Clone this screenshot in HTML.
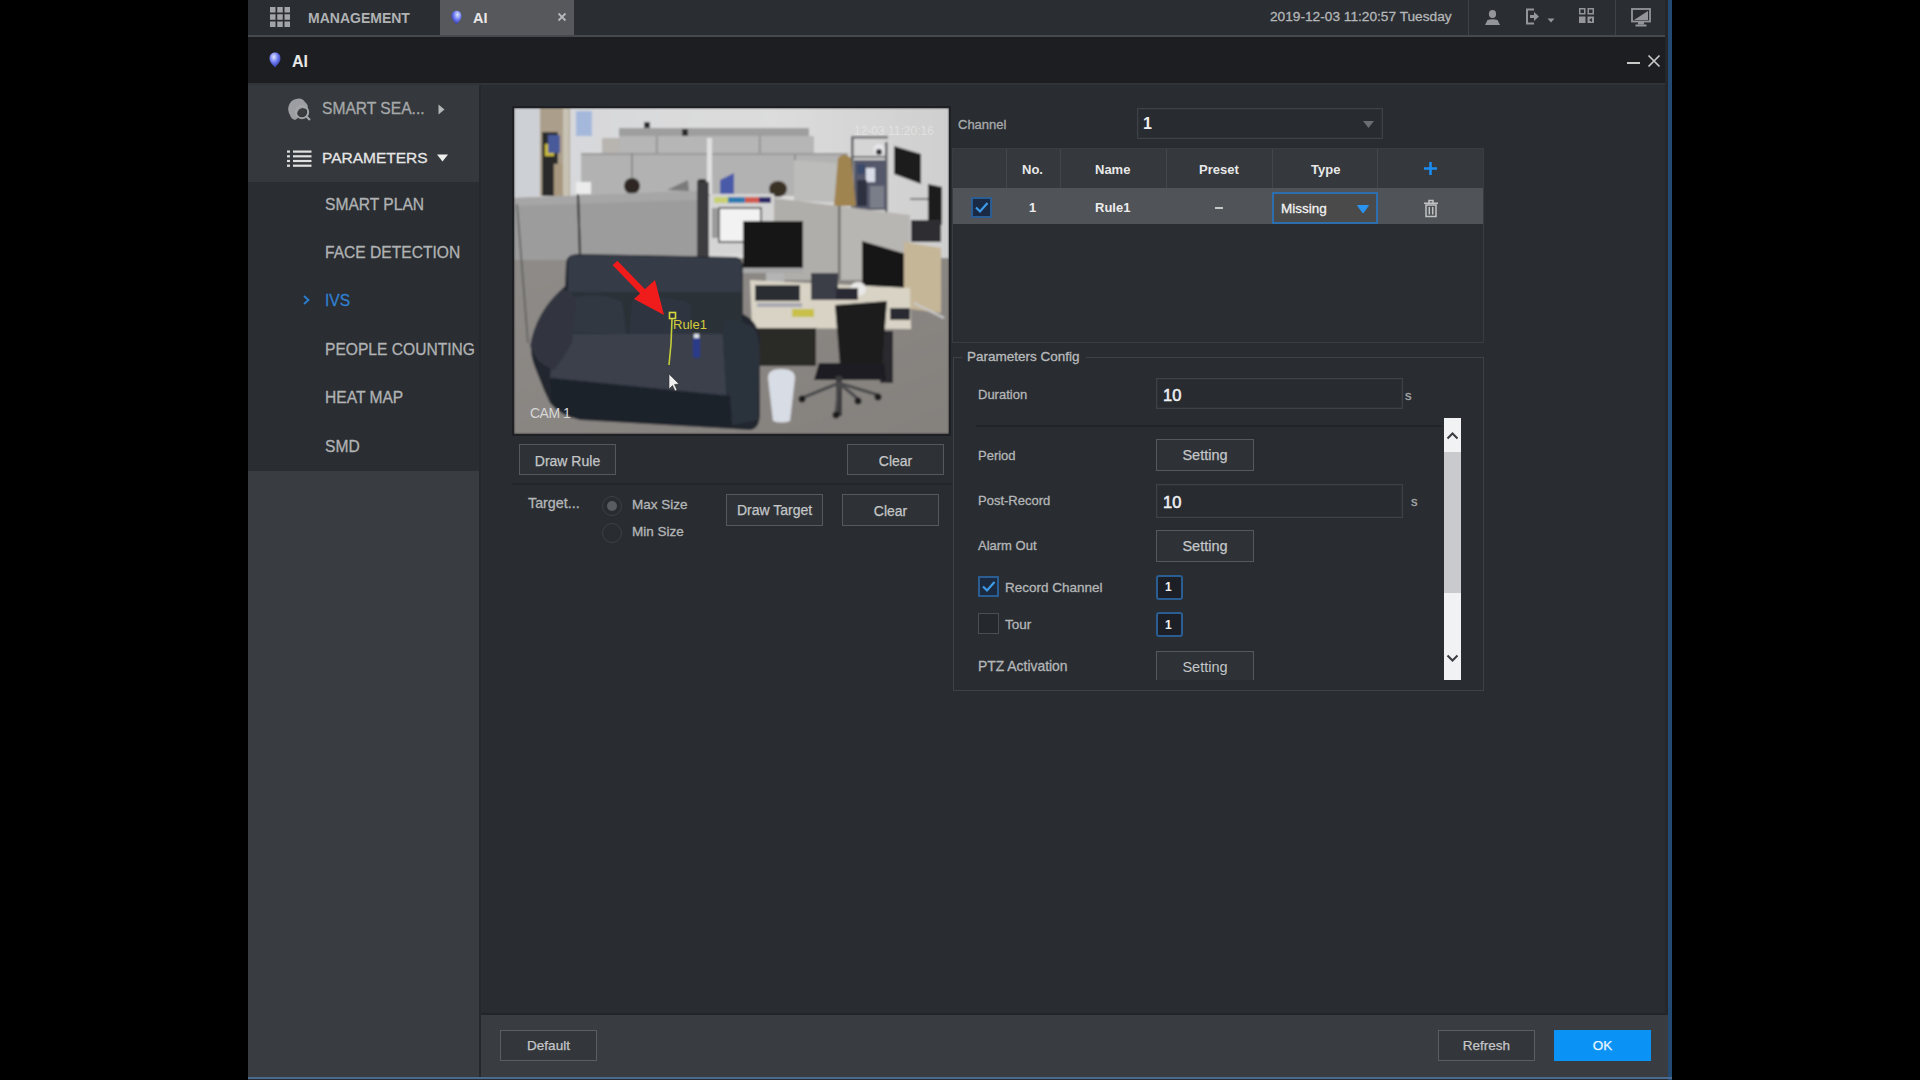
<!DOCTYPE html>
<html><head><meta charset="utf-8">
<style>
*{box-sizing:border-box;margin:0;padding:0}
html,body{width:1920px;height:1080px;overflow:hidden;background:#000;font-family:"Liberation Sans",sans-serif}
.a{position:absolute}
.t{position:absolute;white-space:pre;line-height:1;-webkit-text-stroke:0.3px currentColor}
.btn{position:absolute;border:1px solid #55585c;background:#2e3236;color:#c4c6c8;font-size:14px;text-align:center;-webkit-text-stroke:0.25px currentColor}
.inp{position:absolute;border:1px solid #3e4145;background:#282b2f;box-shadow:inset 0 0 0 1px #2e3135}
</style></head><body>
<!-- window -->
<div class="a" style="left:248px;top:0;width:1424px;height:1080px;background:#292d31"></div>
<!-- top bar -->
<div class="a" style="left:248px;top:0;width:1422px;height:35px;background:#2a2d32"></div>
<div class="a" style="left:248px;top:35px;width:1422px;height:2px;background:#45484c"></div>
<div class="a" style="left:440px;top:0;width:134px;height:35px;background:#57585c"></div>
<div class="a" style="left:1468px;top:0;width:1px;height:35px;background:#3e4145"></div>
<div class="a" style="left:1615px;top:0;width:1px;height:35px;background:#3e4145"></div>
<!-- title bar -->
<div class="a" style="left:248px;top:37px;width:1422px;height:46px;background:#1c1e21"></div>
<div class="a" style="left:248px;top:83px;width:1422px;height:2px;background:#303337"></div>
<!-- sidebar -->
<div class="a" style="left:248px;top:85px;width:231px;height:97px;background:#35383c"></div>
<div class="a" style="left:248px;top:182px;width:231px;height:289px;background:#2a2d31"></div>
<div class="a" style="left:248px;top:471px;width:231px;height:607px;background:#393c40"></div>
<div class="a" style="left:479px;top:85px;width:2px;height:993px;background:#25282c"></div>
<!-- footer -->
<div class="a" style="left:481px;top:1013px;width:1189px;height:2px;background:#232629"></div>
<div class="a" style="left:481px;top:1015px;width:1187px;height:62px;background:#393c40"></div>
<!-- blue edges -->
<div class="a" style="left:1665px;top:0;width:3px;height:1014px;background:#25272b"></div><div class="a" style="left:1668px;top:0;width:4px;height:1080px;background:#224a72"></div>
<div class="a" style="left:248px;top:1077px;width:1424px;height:2px;background:#4a6a90"></div>

<!-- top bar content -->
<svg class="a" style="left:270px;top:7px" width="20" height="20" viewBox="0 0 20 20" fill="#a2a4a8"><rect x="0.00" y="0.00" width="5.5" height="5.5"/><rect x="7.25" y="0.00" width="5.5" height="5.5"/><rect x="14.50" y="0.00" width="5.5" height="5.5"/><rect x="0.00" y="7.25" width="5.5" height="5.5"/><rect x="7.25" y="7.25" width="5.5" height="5.5"/><rect x="14.50" y="7.25" width="5.5" height="5.5"/><rect x="0.00" y="14.50" width="5.5" height="5.5"/><rect x="7.25" y="14.50" width="5.5" height="5.5"/><rect x="14.50" y="14.50" width="5.5" height="5.5"/></svg>
<div class="t" style="left:308px;top:11px;font-size:14px;font-weight:700;-webkit-text-stroke:0;color:#b0b2b4">MANAGEMENT</div>
<svg class="a" style="left:451px;top:10px" width="11" height="15" viewBox="0 0 12 16"><defs><radialGradient id="bg1" cx="0.6" cy="0.3" r="0.75"><stop offset="0" stop-color="#dfe6ff"/><stop offset="0.5" stop-color="#6a78f0"/><stop offset="1" stop-color="#2a309a"/></radialGradient></defs><path d="M6 0.5C9.5 0.5 11.5 3 11.5 6.5C11.5 10 8.5 12.5 6 15.5C3.5 12.5 0.5 10 0.5 6.5C0.5 3 2.5 0.5 6 0.5Z" fill="url(#bg1)"/></svg>
<div class="t" style="left:473px;top:11px;font-size:14.5px;font-weight:700;-webkit-text-stroke:0;color:#e8e8e8">AI</div>
<svg class="a" style="left:557px;top:12px" width="10" height="10" viewBox="0 0 10 10"><path d="M1.5 1.5L8.5 8.5M8.5 1.5L1.5 8.5" stroke="#b8b8bc" stroke-width="1.8"/></svg>
<div class="t" style="left:1270px;top:10px;font-size:13.7px;color:#b4b6b8">2019-12-03 11:20:57 Tuesday</div>

<!-- topbar icons -->
<svg class="a" style="left:1484px;top:9px" width="17" height="17" viewBox="0 0 17 17" fill="#939599">
<ellipse cx="8.5" cy="5" rx="3.6" ry="4"/><path d="M1 16 L3.5 11 Q8.5 9.5 13.5 11 L16 16Z"/></svg>
<svg class="a" style="left:1525px;top:8px" width="31" height="17" viewBox="0 0 31 17">
<path d="M9 1.5 H2 V15.5 H9" stroke="#939599" stroke-width="2" fill="none"/>
<path d="M5 7 H9 V4 L14 8.5 L9 13 V10 H5Z" fill="#939599"/>
<path d="M22.5 10.5 H29.5 L26 14.5Z" fill="#939599"/></svg>
<svg class="a" style="left:1578px;top:7px" width="17" height="17" viewBox="0 0 17 17" fill="#939599">
<path d="M1 1H7.5V7.5H1Z M2.5 2.5V6H6V2.5Z" fill-rule="evenodd"/><path d="M9.5 1H16V7.5H9.5Z M11 2.5V6H14.5V2.5Z" fill-rule="evenodd"/>
<rect x="1" y="9.5" width="6.5" height="6.5"/><path d="M9.5 9.5H16V16H9.5Z M11 13L14 11V15Z" fill-rule="evenodd"/></svg>
<svg class="a" style="left:1631px;top:8px" width="20" height="19" viewBox="0 0 20 19">
<rect x="1" y="1" width="18" height="12.5" fill="none" stroke="#939599" stroke-width="1.8"/>
<path d="M3 12 L17 3 V12Z" fill="#939599"/><rect x="7" y="14" width="6" height="2.5" fill="#939599"/><rect x="4.5" y="16.5" width="11" height="2" fill="#939599"/></svg>
<!-- title bar content -->
<svg class="a" style="left:269px;top:52px" width="12" height="16" viewBox="0 0 12 16"><defs><radialGradient id="bg2" cx="0.4" cy="0.3" r="0.75"><stop offset="0" stop-color="#dfe6ff"/><stop offset="0.5" stop-color="#6a78f0"/><stop offset="1" stop-color="#2a309a"/></radialGradient></defs><path d="M6 0.5C9.5 0.5 11.5 3 11.5 6.5C11.5 10 8.5 12.5 6 15.5C3.5 12.5 0.5 10 0.5 6.5C0.5 3 2.5 0.5 6 0.5Z" fill="url(#bg2)"/></svg>
<div class="t" style="left:292px;top:53.5px;font-size:16px;font-weight:700;-webkit-text-stroke:0;color:#e8e8e8">AI</div>
<div class="a" style="left:1627px;top:62px;width:13px;height:2px;background:#c8c8c8"></div>
<svg class="a" style="left:1647px;top:54px" width="14" height="14" viewBox="0 0 14 14"><path d="M1.5 1.5L12.5 12.5M12.5 1.5L1.5 12.5" stroke="#c8c8c8" stroke-width="1.7"/></svg>

<!-- sidebar content -->
<svg class="a" style="left:287px;top:97px" width="25" height="25" viewBox="0 0 25 25">
<path d="M9 2 Q15 0 18 5 Q21 7 21 10 L19 12 Q14 10 11 14 Q9 18 11 21 L8 23 Q4 22 3 18 Q0 13 2 8 Q4 3 9 2Z" fill="#9c9ea1"/>
<circle cx="15" cy="15" r="6.2" fill="none" stroke="#a4a6a8" stroke-width="2"/>
<circle cx="15" cy="15" r="3.6" fill="#3a3c40"/>
<path d="M19.5 19.5 L23 23" stroke="#a4a6a8" stroke-width="2.2"/>
</svg>
<div class="t" style="left:322px;top:101px;font-size:15.6px;color:#a6a8aa">SMART SEA...</div>
<svg class="a" style="left:438px;top:104px" width="7" height="11" viewBox="0 0 7 11"><path d="M0.5 0.5 L6.5 5.5 L0.5 10.5Z" fill="#b4b6b8"/></svg>
<svg class="a" style="left:287px;top:150px" width="25" height="18" viewBox="0 0 25 18" fill="#e0e0e0">
<rect x="0" y="0.5" width="3" height="2.2"/><rect x="6" y="0.5" width="18.5" height="2.2"/>
<rect x="0" y="5.2" width="3" height="2.2"/><rect x="6" y="5.2" width="18.5" height="2.2"/>
<rect x="0" y="9.9" width="3" height="2.2"/><rect x="6" y="9.9" width="18.5" height="2.2"/>
<rect x="0" y="14.6" width="3" height="2.2"/><rect x="6" y="14.6" width="18.5" height="2.2"/>
</svg>
<div class="t" style="left:322px;top:150px;font-size:15.5px;color:#e6e6e6">PARAMETERS</div>
<svg class="a" style="left:437px;top:154px" width="11" height="8" viewBox="0 0 11 8"><path d="M0 0.5 H11 L5.5 7.5Z" fill="#eeeeee"/></svg>
<div class="t" style="left:325px;top:197px;font-size:15.6px;color:#b0b2b4">SMART PLAN</div>
<div class="t" style="left:325px;top:245px;font-size:15.6px;color:#b0b2b4">FACE DETECTION</div>
<svg class="a" style="left:303px;top:295px" width="7" height="10" viewBox="0 0 7 10"><path d="M1 1 L5.5 5 L1 9" stroke="#2a7fd0" stroke-width="1.8" fill="none"/></svg>
<div class="t" style="left:325px;top:293px;font-size:15.6px;color:#2f7fd0">IVS</div>
<div class="t" style="left:325px;top:342px;font-size:15.6px;color:#b0b2b4">PEOPLE COUNTING</div>
<div class="t" style="left:325px;top:390px;font-size:15.6px;color:#b0b2b4">HEAT MAP</div>
<div class="t" style="left:325px;top:439px;font-size:15.6px;color:#b0b2b4">SMD</div>

<!-- camera -->
<div class="a" style="left:512px;top:106px;width:439px;height:330px;background:#1e2024"></div>
<svg class="a" style="left:514px;top:108px" width="435" height="326" viewBox="0 0 435 326">
<defs><filter id="bl" x="0" y="0" width="1" height="1"><feGaussianBlur stdDeviation="1.3"/></filter>
<linearGradient id="wallg" x1="0" y1="0" x2="1" y2="0"><stop offset="0" stop-color="#d6d7da"/><stop offset="0.6" stop-color="#dcdcdc"/><stop offset="1" stop-color="#cfcfcf"/></linearGradient>
<linearGradient id="floorg" x1="0" y1="0" x2="1" y2="1"><stop offset="0" stop-color="#8e8b88"/><stop offset="1" stop-color="#85817d"/></linearGradient>
</defs>
<g filter="url(#bl)">
<rect width="435" height="326" fill="url(#wallg)"/>
<rect y="150" width="435" height="176" fill="url(#floorg)"/>
<!-- left wall & door -->
<rect x="0" y="0" width="26" height="92" fill="#cdd0d4"/>
<rect x="26" y="0" width="30" height="88" fill="#ab9e8a"/>
<rect x="28" y="24" width="16" height="64" fill="#2c2b2a"/>
<rect x="40" y="56" width="12" height="32" fill="#a89880"/>
<rect x="31" y="36" width="9" height="12" fill="#c9bb3a"/>
<rect x="34" y="27" width="12" height="18" fill="#4a5a9a"/>
<rect x="49" y="0" width="6" height="88" fill="#c8c2b4"/>
<!-- TV -->
<rect x="62" y="3" width="16" height="25" fill="#a4b8dc"/>
<!-- back top cubicles -->
<rect x="105" y="20" width="190" height="8" fill="#9e9e9e"/>
<rect x="105" y="28" width="195" height="22" fill="#b6b6b6"/>
<rect x="142" y="28" width="1.5" height="22" fill="#8a8a8a"/>
<rect x="245" y="28" width="1.5" height="22" fill="#8a8a8a"/>
<rect x="88" y="30" width="17" height="18" fill="#b8b4b0"/>
<rect x="130" y="14" width="6" height="6" fill="#2a2a2a"/>
<rect x="168" y="21" width="6" height="7" fill="#2a2a2a"/>
<!-- middle cubicles -->
<rect x="67" y="45" width="267" height="43" fill="#b2b2b2"/>
<rect x="67" y="45" width="267" height="2" fill="#9a9a9a"/>
<rect x="117" y="45" width="2" height="43" fill="#8c8c8c"/>
<rect x="280" y="47" width="2" height="45" fill="#8c8c8c"/>
<polygon points="280,52 334,56 334,95 280,93" fill="#bcbcba"/>
<ellipse cx="118" cy="78" rx="8" ry="8" fill="#2e2824"/>
<ellipse cx="264" cy="81" rx="9" ry="8" fill="#3a3028"/>
<polygon points="153,82 174,72 175,83" fill="#7a7a7a"/>
<rect x="183" y="71" width="10" height="16" rx="4" fill="#2c2c2c"/>
<rect x="193" y="30" width="5" height="56" fill="#e0e0e0"/>
<polygon points="206,72 220,65 220,86 206,86" fill="#4a5aa8"/>
<!-- shelf rack -->
<rect x="337" y="28" width="2.5" height="76" fill="#5a5a5e"/>
<rect x="371" y="34" width="2.5" height="70" fill="#5a5a5e"/>
<rect x="337" y="28" width="37" height="2.5" fill="#6a6a6e"/>
<rect x="339" y="48" width="33" height="2" fill="#6a6a6e"/>
<circle cx="365" cy="42" r="6" fill="#e6e6ea"/><circle cx="365" cy="44" r="3" fill="#2a2a2e"/>
<rect x="340" y="52" width="32" height="50" fill="#55596a"/>
<rect x="343" y="56" width="8" height="10" fill="#3a4a6a"/><rect x="352" y="60" width="9" height="14" fill="#d8dce6"/>
<rect x="343" y="72" width="10" height="26" fill="#2e3240"/><rect x="356" y="78" width="14" height="22" fill="#7a7e88"/>
<path d="M324 50 Q330 43 337 50 L342 98 L320 98Z" fill="#a08450"/>
<!-- wall monitors -->
<polygon points="380,38 407,46 407,76 380,66" fill="#1a1a1a"/>
<polygon points="414,76 428,79 428,117 414,113" fill="#1a1a1a"/>
<rect x="396" y="90" width="18" height="2" fill="#7a7a7a"/>
<rect x="397" y="112" width="30" height="22" fill="#2e2e32"/>
<!-- front partition left -->
<polygon points="0,90 183,83 183,152 0,152" fill="#9c9c9c"/>
<polygon points="0,90 183,83 183,92 0,98" fill="#a6a6a6"/>
<line x1="3" y1="96" x2="14" y2="235" stroke="#5a5a5a" stroke-width="1.5"/>
<rect x="62" y="74" width="15" height="12" fill="#ececec"/>
<path d="M64 86 L66 148" stroke="#222" stroke-width="2"/>
<rect x="183" y="74" width="12" height="78" fill="#3e3e40"/>
<!-- color chart panel -->
<rect x="196" y="86" width="64" height="60" fill="#d4d4d4"/>
<rect x="200" y="89" width="14" height="6" fill="#c8d070"/>
<rect x="214" y="89" width="17" height="6" fill="#2a7ab0"/>
<rect x="231" y="89" width="14" height="6" fill="#d05a50"/>
<rect x="245" y="89" width="12" height="6" fill="#2e2a6a"/>
<rect x="205" y="100" width="42" height="34" fill="#f2f2f2" stroke="#3a3a3a" stroke-width="1.5"/>
<rect x="198" y="100" width="6" height="30" fill="#9a9a9a"/>
<!-- right partitions -->
<polygon points="260,90 325,98 325,172 260,172" fill="#b0aeaa"/>
<polygon points="325,98 396,107 396,172 325,172" fill="#b8b6b2"/>
<rect x="324" y="98" width="2.5" height="74" fill="#707070"/>
<!-- monitors -->
<rect x="229" y="113" width="60" height="51" fill="#131313"/>
<rect x="229" y="160" width="60" height="5" fill="#a8a8a8"/>
<rect x="252" y="165" width="18" height="10" fill="#b4b4b4"/>
<polygon points="348,133 392,146 392,186 348,181" fill="#161616"/>
<!-- cabinet -->
<polygon points="390,134 427,140 427,205 390,200" fill="#c6b698"/>
<line x1="400" y1="195" x2="430" y2="210" stroke="#c8c8c8" stroke-width="2"/>
<!-- desk -->
<polygon points="236,172 396,180 397,221 238,220" fill="#d8d3c5"/>
<rect x="241" y="177" width="45" height="16" fill="#2c2e33"/>
<rect x="243" y="195" width="45" height="4" fill="#a8a8b0"/>
<rect x="297" y="165" width="27" height="27" fill="#3a3e46"/>
<ellipse cx="344" cy="181" rx="8" ry="7" fill="#e8e8e6"/>
<rect x="322" y="180" width="22" height="12" fill="#2a2c34"/>
<rect x="278" y="201" width="22" height="8" fill="#c8c048"/>
<rect x="376" y="200" width="20" height="12" fill="#2a2c30"/>
<rect x="242" y="220" width="60" height="38" fill="#2c2927"/>
<rect x="366" y="223" width="13" height="52" fill="#2c2c2e"/>
<!-- chair -->
<polygon points="321,197 373,193 367,270 327,270" fill="#1b1b1d"/>
<polygon points="305,255 370,255 372,272 300,272" fill="#1e1e20"/>
<rect x="322" y="268" width="6" height="40" fill="#3a3a3c"/>
<line x1="325" y1="275" x2="288" y2="290" stroke="#4a4a4c" stroke-width="3"/>
<line x1="325" y1="275" x2="344" y2="291" stroke="#4a4a4c" stroke-width="3"/>
<line x1="325" y1="275" x2="364" y2="287" stroke="#4a4a4c" stroke-width="3"/>
<line x1="325" y1="275" x2="322" y2="306" stroke="#4a4a4c" stroke-width="3"/>
<circle cx="288" cy="291" r="3.5" fill="#1a1a1a"/><circle cx="344" cy="293" r="3.5" fill="#1a1a1a"/><circle cx="364" cy="289" r="3.5" fill="#1a1a1a"/><circle cx="322" cy="307" r="3.5" fill="#1a1a1a"/>
<!-- wastebasket -->
<path d="M254 270 Q254 261 267 261 Q281 261 281 270 L276 313 Q268 316 259 313 Z" fill="#d8dce4"/>
<!-- sofa -->
<path d="M52 156 Q52 146 64 146 L222 149 Q229 150 229 160 L229 206 Q242 212 246 228 L246 305 Q246 321 236 322 L66 312 Q46 308 36 295 L30 282 L22 262 Q13 240 20 228 Q32 196 47 182 L51 178 Z" fill="#22262e"/>
<path d="M54 152 Q55 147 64 147 L221 150 Q228 151 228 160 L228 185 L54 186Z" fill="#353b46"/>
<path d="M54 184 L228 184 L228 226 L56 226Z" fill="#2b3039"/>
<path d="M58 190 Q85 183 108 194 L112 226 L58 224Z" fill="#323843"/>
<path d="M118 192 Q150 186 176 196 L178 226 L116 226Z" fill="#2f3540"/>
<polygon points="40,226 214,226 216,288 36,270" fill="#3a404b"/>
<path d="M16 238 Q22 204 47 182 Q58 180 62 194 L58 234 Q50 250 40 262 Q24 258 16 238Z" fill="#30353f"/>
<path d="M208 214 Q224 208 240 220 Q247 230 246 252 L244 312 L214 318 Z" fill="#2c313a"/>
<path d="M36 270 L216 288 L218 318 L66 310 Q48 306 38 294Z" fill="#1e2229"/>
<!-- bottle -->
<rect x="179" y="229" width="7" height="21" rx="2" fill="#2b3a8a"/>
<rect x="180" y="226" width="5" height="4" fill="#dfe4f0"/>
</g>
<!-- rule -->
<rect x="155.5" y="204.5" width="6" height="6" fill="none" stroke="#d8d83a" stroke-width="1.6"/>
<path d="M158 211 L157 236 L155 257" stroke="#c4cc3a" stroke-width="1.6" fill="none"/>
<text x="159" y="221" font-family="Liberation Sans" font-size="13" fill="#d4cc3a">Rule1</text>
<!-- red arrow -->
<path d="M101 155 L134 189" stroke="#f01c1c" stroke-width="6.5"/>
<polygon points="150,207 120,191 141,172" fill="#f01c1c"/>
<!-- cursor -->
<path d="M155 266 L155 281 L158.5 277.5 L161 283 L163 282 L160.5 276.5 L165 276 Z" fill="#f0f0f0" stroke="#333" stroke-width="0.6"/>
<text x="16" y="310" font-family="Liberation Sans" font-size="14" fill="#d6d6d6" letter-spacing="-0.5">CAM 1</text>
<text x="340" y="27" font-family="Liberation Sans" font-size="12" fill="#ffffff" fill-opacity="0.35">12-03 11:20:16</text>
</svg>


<!-- left buttons -->
<div class="btn" style="left:519px;top:444px;width:97px;height:31px;line-height:32px">Draw Rule</div>
<div class="btn" style="left:847px;top:444px;width:97px;height:31px;line-height:32px">Clear</div>
<div class="a" style="left:512px;top:483px;width:440px;height:2px;background:#222529"></div>
<div class="t" style="left:528px;top:496px;font-size:14.3px;color:#b4b6b8">Target...</div>
<div class="btn" style="left:726px;top:494px;width:97px;height:32px;line-height:31px">Draw Target</div>
<div class="btn" style="left:842px;top:494px;width:97px;height:32px;line-height:33px">Clear</div>

<!-- right panel -->
<div class="t" style="left:958px;top:118px;font-size:13px;color:#a8aaac">Channel</div>
<div class="inp" style="left:1137px;top:108px;width:246px;height:31px"></div>
<div class="t" style="left:1143px;top:116px;font-size:16px;font-weight:700;-webkit-text-stroke:0;color:#f0f0f0">1</div>


<!-- table -->
<div class="a" style="left:952px;top:148px;width:532px;height:195px;border:1px solid #393c40;background:#2a2d31"></div>
<div class="a" style="left:953px;top:149px;width:530px;height:39px;background:#35383c"></div>
<div class="a" style="left:1006px;top:149px;width:1px;height:39px;background:#43464a"></div>
<div class="a" style="left:1060px;top:149px;width:1px;height:39px;background:#43464a"></div>
<div class="a" style="left:1166px;top:149px;width:1px;height:39px;background:#43464a"></div>
<div class="a" style="left:1272px;top:149px;width:1px;height:39px;background:#43464a"></div>
<div class="a" style="left:1377px;top:149px;width:1px;height:39px;background:#43464a"></div>
<div class="t" style="left:1022px;top:163px;font-size:13px;font-weight:700;-webkit-text-stroke:0;color:#e8e8e8">No.</div>
<div class="t" style="left:1095px;top:163px;font-size:13px;font-weight:700;-webkit-text-stroke:0;color:#e8e8e8">Name</div>
<div class="t" style="left:1199px;top:163px;font-size:13px;font-weight:700;-webkit-text-stroke:0;color:#e8e8e8">Preset</div>
<div class="t" style="left:1311px;top:163px;font-size:13px;font-weight:700;-webkit-text-stroke:0;color:#e8e8e8">Type</div>
<svg class="a" style="left:1423px;top:161px" width="15" height="15" viewBox="0 0 15 15"><path d="M7.5 1V14M1 7.5H14" stroke="#1b8cf0" stroke-width="2.6"/></svg>
<div class="a" style="left:953px;top:188px;width:530px;height:36px;background:#505357"></div>
<div class="a" style="left:971px;top:197px;width:21px;height:21px;border:2px solid #2a5d92;background:#1a2a44"></div>
<svg class="a" style="left:973px;top:199px" width="17" height="17" viewBox="0 0 17 17"><path d="M3 8.5L7 12.5L14.5 4" stroke="#3d9be8" stroke-width="2.2" fill="none"/></svg>
<div class="t" style="left:1029px;top:201px;font-size:13px;font-weight:700;-webkit-text-stroke:0;color:#ececec">1</div>
<div class="t" style="left:1095px;top:201px;font-size:13px;font-weight:700;-webkit-text-stroke:0;color:#ececec">Rule1</div>
<div class="a" style="left:1215px;top:207px;width:8px;height:2px;background:#c8c8c8"></div>
<div class="a" style="left:1272px;top:192px;width:106px;height:32px;border:2px solid #2d6fae;background:#4b4a4a"></div>
<div class="t" style="left:1281px;top:202px;font-size:13.5px;color:#f2f2f2">Missing</div>
<svg class="a" style="left:1357px;top:205px" width="12" height="9" viewBox="0 0 12 9"><path d="M0.5 0.5H11.5L6 8Z" fill="#2a95f0" stroke="#2a95f0" stroke-width="1" stroke-linejoin="round"/></svg>
<svg class="a" style="left:1423px;top:199px" width="16" height="19" viewBox="0 0 16 19" fill="none" stroke="#c0c2c4" stroke-width="1.5"><path d="M1 4.2H15M6 4V1.5H10V4M3 6H13V17.5H3Z M6.3 8V15.5M9.7 8V15.5"/></svg>

<!-- channel dropdown arrow -->
<svg class="a" style="left:1363px;top:121px" width="11" height="8" viewBox="0 0 11 8"><path d="M0 0H11L5.5 7Z" fill="#6a6d71"/></svg>

<!-- params config fieldset -->
<div class="a" style="left:953px;top:357px;width:531px;height:334px;border:1px solid #3e4145"></div>
<div class="a" style="left:962px;top:348px;width:124px;height:18px;background:#292d31"></div>
<div class="t" style="left:967px;top:350px;font-size:13.5px;color:#b8babc">Parameters Config</div>
<div class="t" style="left:978px;top:388px;font-size:13px;color:#b4b6b8">Duration</div>
<div class="inp" style="left:1156px;top:378px;width:247px;height:31px"></div>
<div class="t" style="left:1163px;top:387px;font-size:16.5px;-webkit-text-stroke:0.55px currentColor;color:#eef0f2">10</div>
<div class="t" style="left:1405px;top:389px;font-size:13px;color:#a8aaac">s</div>
<div class="a" style="left:976px;top:425px;width:466px;height:2px;background:#222528"></div>
<div class="t" style="left:978px;top:449px;font-size:13px;color:#b4b6b8">Period</div>
<div class="btn" style="left:1156px;top:439px;width:98px;height:32px;line-height:31px;font-size:14.5px">Setting</div>
<div class="t" style="left:978px;top:494px;font-size:13px;color:#b4b6b8">Post-Record</div>
<div class="inp" style="left:1156px;top:484px;width:247px;height:34px"></div>
<div class="t" style="left:1163px;top:494px;font-size:16.5px;-webkit-text-stroke:0.55px currentColor;color:#eef0f2">10</div>
<div class="t" style="left:1411px;top:495px;font-size:13px;color:#a8aaac">s</div>
<div class="t" style="left:978px;top:539px;font-size:13px;color:#b4b6b8">Alarm Out</div>
<div class="btn" style="left:1156px;top:530px;width:98px;height:32px;line-height:31px;font-size:14.5px">Setting</div>
<div class="a" style="left:978px;top:576px;width:21px;height:21px;border:2px solid #2a5d92;background:#1c2a40"></div>
<svg class="a" style="left:980px;top:578px" width="17" height="17" viewBox="0 0 17 17"><path d="M3 8.5L7 12.5L14.5 4" stroke="#3d9be8" stroke-width="2.2" fill="none"/></svg>
<div class="t" style="left:1005px;top:581px;font-size:13.5px;color:#b4b6b8">Record Channel</div>
<div class="a" style="left:1156px;top:575px;width:27px;height:25px;border:2px solid #2a5d92;border-radius:3px;background:#1c2026"></div>
<div class="t" style="left:1165px;top:581px;font-size:12px;font-weight:700;-webkit-text-stroke:0;color:#f0f0f0">1</div>
<div class="a" style="left:978px;top:613px;width:21px;height:21px;border:1px solid #4a4d51;background:#25282c"></div>
<div class="t" style="left:1005px;top:618px;font-size:13.5px;color:#b4b6b8">Tour</div>
<div class="a" style="left:1156px;top:612px;width:27px;height:25px;border:2px solid #2a5d92;border-radius:3px;background:#1c2026"></div>
<div class="t" style="left:1165px;top:619px;font-size:12px;font-weight:700;-webkit-text-stroke:0;color:#f0f0f0">1</div>
<div class="t" style="left:978px;top:660px;font-size:13.9px;color:#b4b6b8">PTZ Activation</div>
<div class="a" style="left:1156px;top:651px;width:98px;height:29px;border:1px solid #55585c;border-bottom:none;background:#2e3236;overflow:hidden"><div style="text-align:center;color:#c4c6c8;font-size:14.5px;line-height:31px">Setting</div></div>
<!-- scrollbar -->
<div class="a" style="left:1444px;top:418px;width:17px;height:262px;background:#f0f2f4"></div>
<div class="a" style="left:1444px;top:452px;width:17px;height:141px;background:#c8cacd"></div>
<svg class="a" style="left:1446px;top:431px" width="13" height="9" viewBox="0 0 13 9"><path d="M1.5 7.5L6.5 2.5L11.5 7.5" stroke="#3a3c40" stroke-width="2" fill="none"/></svg>
<svg class="a" style="left:1446px;top:654px" width="13" height="9" viewBox="0 0 13 9"><path d="M1.5 1.5L6.5 6.5L11.5 1.5" stroke="#3a3c40" stroke-width="2" fill="none"/></svg>

<!-- radios -->
<div class="a" style="left:602px;top:496px;width:20px;height:20px;border-radius:50%;border:1.5px solid #3d4044"></div>
<div class="a" style="left:607px;top:501px;width:10px;height:10px;border-radius:50%;background:#595c60"></div>
<div class="t" style="left:632px;top:498px;font-size:13.5px;color:#b4b6b8">Max Size</div>
<div class="a" style="left:602px;top:523px;width:20px;height:20px;border-radius:50%;border:1.5px solid #3d4044"></div>
<div class="t" style="left:632px;top:525px;font-size:13.5px;color:#b4b6b8">Min Size</div>

<!-- footer buttons -->
<div class="btn" style="left:500px;top:1030px;width:97px;height:31px;line-height:30px;font-size:13.5px;border-color:#5a5d61;background:#33363a">Default</div>
<div class="btn" style="left:1438px;top:1030px;width:97px;height:31px;line-height:30px;font-size:13.5px;border-color:#5a5d61;background:#33363a">Refresh</div>
<div class="btn" style="left:1554px;top:1030px;width:97px;height:31px;line-height:31px;font-size:13.5px;border:none;background:#0a93f5;color:#e8f6ff">OK</div>

</body></html>
